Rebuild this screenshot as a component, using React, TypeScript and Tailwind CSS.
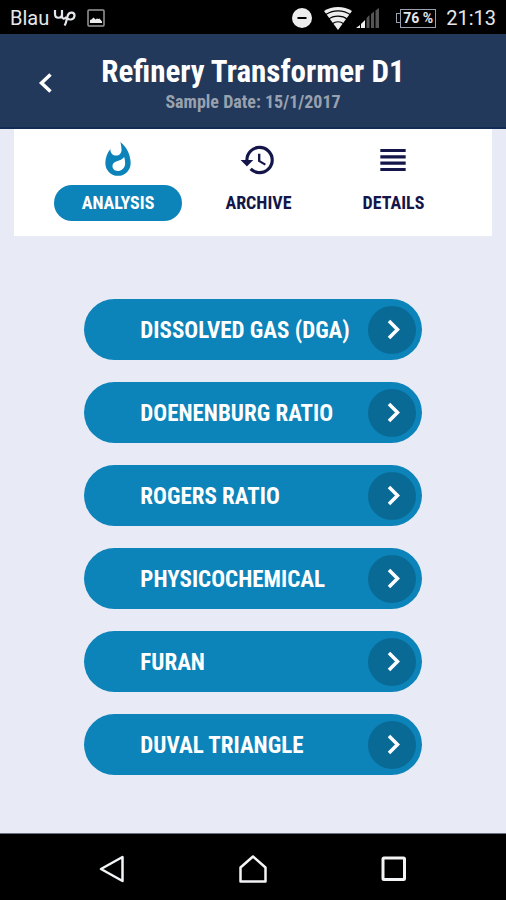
import { MdHistory, MdViewHeadline, MdWhatshot } from "react-icons/md";

const tests = [
  "Dissolved Gas (DGA)",
  "Doenenburg Ratio",
  "Rogers Ratio",
  "Physicochemical",
  "Furan",
  "Duval Triangle",
];

const tabs = [
  { label: "Analysis", icon: MdWhatshot, active: true },
  { label: "Archive", icon: MdHistory, active: false },
  { label: "Details", icon: MdViewHeadline, active: false },
];

const StatusBar = () => (
  <div className="flex h-[34px] items-center bg-black px-2.5 pt-0.5 font-['Roboto',sans-serif] text-xl text-gray-200">
    <span>Blau</span>
    {/* carrier logo */}
    <svg className="ml-1 h-5 w-6" viewBox="0 0 24 20" fill="none" stroke="currentColor" strokeWidth="2.2">
      <path d="M2 2v4c0 5 7 5 7 0V2v6c0 3 2 3.500 4.500 1" />
      <path d="M11.500 17.500c2-2 2-7 3.500-10.500C16.500 3.500 21.500 4 21.500 7.500s-4.500 5.500-7.500 2.500" />
    </svg>
    <svg className="ml-2.5 h-[18px] w-[18px]" viewBox="0 0 18 18">
      <rect x="1" y="1" width="16" height="16" rx="1" fill="none" stroke="#999" strokeWidth="1.5" />
      <path d="M3 14v-3l1.500-.5 2-2 2 2 1.500-1 1.500.5 1-.5 2.500 3V14z" fill="#eee" />
    </svg>

    <div className="ml-auto flex items-center">
      <svg className="h-5 w-5" viewBox="0 0 20 20">
        <circle cx="10" cy="10" r="10" fill="#eee" />
        <path d="M5.500 10h9" stroke="#000" strokeWidth="2" />
      </svg>
      <svg className="ml-3 h-6 w-7" viewBox="0 0 28 24">
        <path d="M0 5C8-.5 20-.5 28 5L14 24z" fill="#eee" />
        <path d="M1 9c8-5.500 18-5.500 26 0M4 13.500c6-4.500 14-4.500 20 0M8 18c4-3 8-3 12 0" fill="none" stroke="#000" strokeWidth="1.2" />
      </svg>
      <svg className="ml-1 h-[22px] w-6" viewBox="0 0 24 22">
        <path d="M0 21l4-3v3zM5 21v-4l4-4v8z" fill="#eee" />
        <path d="M10.500 11l3-3v13h-3zM15 7l3-2.500V21h-3zM19.500 3.500L23 1v20h-3.500z" fill="#555" />
      </svg>
      <div className="ml-4 h-2.5 w-1 border border-r-0 border-gray-400" />
      <span className="flex h-[19px] w-9 items-center justify-center border border-gray-400 text-sm font-bold">76 %</span>
      <span className="ml-2.5">21:13</span>
    </div>
  </div>
);

const NavBar = () => (
  <nav className="flex h-[67px] items-center justify-center gap-[113px] border-t border-gray-500 bg-black pt-1 text-gray-100">
    <button aria-label="Back">
      <svg className="h-7 w-7" viewBox="0 0 28 28" fill="none" stroke="currentColor" strokeWidth="2.500">
        <path d="M3 14L24.500 2v24z" strokeLinejoin="round" />
      </svg>
    </button>
    <button aria-label="Home">
      <svg className="h-7 w-7" viewBox="0 0 28 28" fill="none" stroke="currentColor" strokeWidth="2.500">
        <path d="M1.500 12.500L14 1.500l12.500 11v14h-25z" strokeLinejoin="round" />
      </svg>
    </button>
    <button aria-label="Recent apps">
      <svg className="h-7 w-7" viewBox="0 0 28 28" fill="none" stroke="currentColor" strokeWidth="3">
        <rect x="3" y="3" width="21.500" height="21.500" rx="1" />
      </svg>
    </button>
  </nav>
);

const App = () => {
  return (
    <div className="flex min-h-screen flex-col bg-[#e8ebf5] font-['Roboto_Condensed',Roboto,sans-serif]">
      <StatusBar />

      <header className="grid h-[95px] grid-cols-[92px_1fr_92px] items-center border-b-2 border-[#132c55] bg-[#22395b] pt-1.5">
        <button aria-label="Go back" className="flex justify-center text-white">
          <svg className="h-6 w-6" viewBox="0 0 24 24" fill="none" stroke="currentColor" strokeWidth="3.5">
            <path d="M16.500 2.500L7.500 11l9 8.500" />
          </svg>
        </button>
        <div className="text-center font-bold whitespace-nowrap">
          <h1 className="text-[31px] leading-9 text-white">Refinery Transformer D1</h1>
          <p className="text-lg leading-6 text-gray-400">Sample Date: 15/1/2017</p>
        </div>
      </header>

      <div className="mx-[14px] flex h-[107px] justify-center gap-[15px] bg-white pt-3">
        {tabs.map(({ label, icon: Icon, active }) => (
          <button
            key={label}
            className={`flex flex-col items-center gap-1.5 ${active ? "text-[#0c83b9]" : "text-[#14164a]"}`}
          >
            <Icon className="h-[38px] w-[38px]" />
            <span
              className={`flex h-9 items-center justify-center rounded-full px-7 text-lg font-bold uppercase ${active ? "bg-[#0c83b9] text-white" : ""}`}
            >
              {label}
            </span>
          </button>
        ))}
      </div>

      <main className="mx-auto flex w-2/3 grow flex-col gap-[22px] pt-[63px] pb-14">
        {tests.map((test) => (
          <button
            key={test}
            className="flex h-[61px] items-center justify-between rounded-full bg-[#0c83b9] pr-1.5 pl-14 text-[23px] leading-8 font-bold text-white uppercase"
          >
            <span className="pt-0.5">{test}</span>
            <span className="flex h-12 w-12 items-center justify-center rounded-full bg-[#0a6a96]">
              <svg className="h-6 w-6" viewBox="0 0 24 24" fill="none" stroke="currentColor" strokeWidth="3.5">
                <path d="M9 3l8.500 8.500L9 20" />
              </svg>
            </span>
          </button>
        ))}
      </main>

      <NavBar />
    </div>
  );
};

export default App;
